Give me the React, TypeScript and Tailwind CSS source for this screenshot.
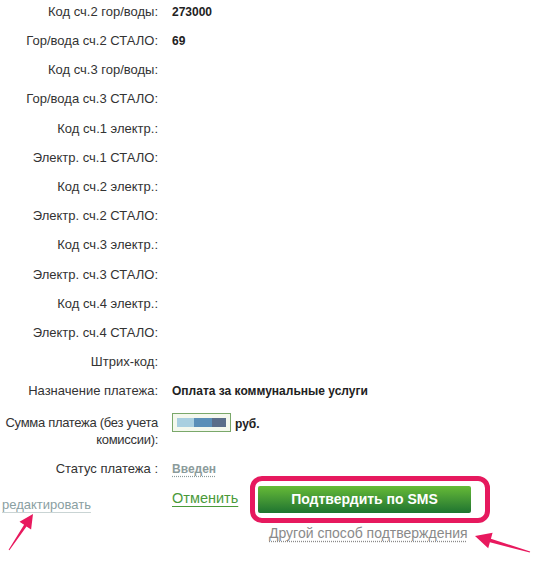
const rows: [string, string][] = [
  ['Код сч.2 гор/воды:', '273000'],
  ['Гор/вода сч.2 СТАЛО:', '69'],
  ['Код сч.3 гор/воды:', ''],
  ['Гор/вода сч.3 СТАЛО:', ''],
  ['Код сч.1 электр.:', ''],
  ['Электр. сч.1 СТАЛО:', ''],
  ['Код сч.2 электр.:', ''],
  ['Электр. сч.2 СТАЛО:', ''],
  ['Код сч.3 электр.:', ''],
  ['Электр. сч.3 СТАЛО:', ''],
  ['Код сч.4 электр.:', ''],
  ['Электр. сч.4 СТАЛО:', ''],
  ['Штрих-код:', ''],
  ['Назначение платежа:', 'Оплата за коммунальные услуги'],
];

function Arrows() {
  return (
    <svg className="pointer-events-none absolute left-0 top-0" width="551" height="561">
      <polygon
        fill="#e8195e"
        points="8.6,549.7 24.1,524.8 19.5,521.7 33,514 31.1,529.5 26.5,526.4 9.4,550.3"
      />
      <polygon
        fill="#e8195e"
        points="529.8,552.6 489.9,542.2 488.2,548.2 475,536 492.6,532.8 490.9,538.8 530.2,551.4"
      />
    </svg>
  );
}

export default function App() {
  return (
    <div className="relative h-[561px] w-[551px] overflow-hidden bg-white font-['Liberation_Sans',Arial,sans-serif] text-[13px] text-[#333]">
      <div className="-mt-[3px] grid grid-cols-[158px_1fr] gap-x-[14px]">
        {rows.map(([label, value]) => (
          <div key={label} className="contents">
            <div className="flex h-[29.2px] items-center justify-end whitespace-nowrap">{label}</div>
            <div className="flex h-[29.2px] items-center text-[12px] font-bold text-[#222]">{value}</div>
          </div>
        ))}

        {/* sum */}
        <div className="flex h-[48px] flex-col items-end whitespace-nowrap pt-[8px] leading-[17px] tracking-[-0.3px]">
          <span>Сумма платежа (без учета</span>
          <span>комиссии):</span>
        </div>
        <div className="flex h-[48px] items-start gap-[4px] pt-[7px]">
          <div className="flex h-[19px] w-[59px] items-center border border-[#7aa86a] bg-[#f4f8ee] px-[4px]">
            <div className="h-[9px] w-[18px] bg-[#a9cfe0]" />
            <div className="h-[9px] w-[18px] bg-[#5b8fb8]" />
            <div className="h-[9px] w-[15px] bg-[#5b6e8a]" />
          </div>
          <span className="pt-[2px] text-[12px] font-bold text-[#222]">руб.</span>
        </div>

        {/* status */}
        <div className="h-[22px] pt-[7px] text-right leading-[15px]">Статус платежа :</div>
        <div className="h-[22px] pt-[7px] leading-[15px]">
          <span className="text-[12px] font-bold text-[#8b9b9b] underline decoration-dotted decoration-[#8b9b9b] underline-offset-[3px]">
            Введен
          </span>
        </div>

        {/* actions */}
        <div className="pl-[2px] pt-[21px] leading-[16px]">
          <a className="text-[13px] text-[#8aa0a2] underline decoration-[#c9d4d4] underline-offset-[3px]">
            редактировать
          </a>
        </div>
        <div className="flex items-start gap-[12px]">
          <a className="mt-[14px] w-[66px] whitespace-nowrap text-[14.5px] leading-[16px] text-[#4a9a3a] underline underline-offset-[3px]">
            Отменить
          </a>
          <div className="flex flex-col">
            <div className="rounded-[12px] border-[5px] border-[#e6195e] py-[5px] pl-[3px] pr-[14px]">
              <button className="flex h-[27px] w-[213px] items-center justify-center rounded-[2px] bg-gradient-to-b from-[#66bb36] to-[#1d7430] text-[14px] font-bold text-white">
                Подтвердить по SMS
              </button>
            </div>
            <a className="ml-[19px] mt-[2px] text-[14px] leading-[16px] text-[#8a8a8a] underline decoration-dotted decoration-[#8a8a8a] underline-offset-[3px]">
              Другой способ подтверждения
            </a>
          </div>
        </div>
      </div>
      <Arrows />
    </div>
  );
}
